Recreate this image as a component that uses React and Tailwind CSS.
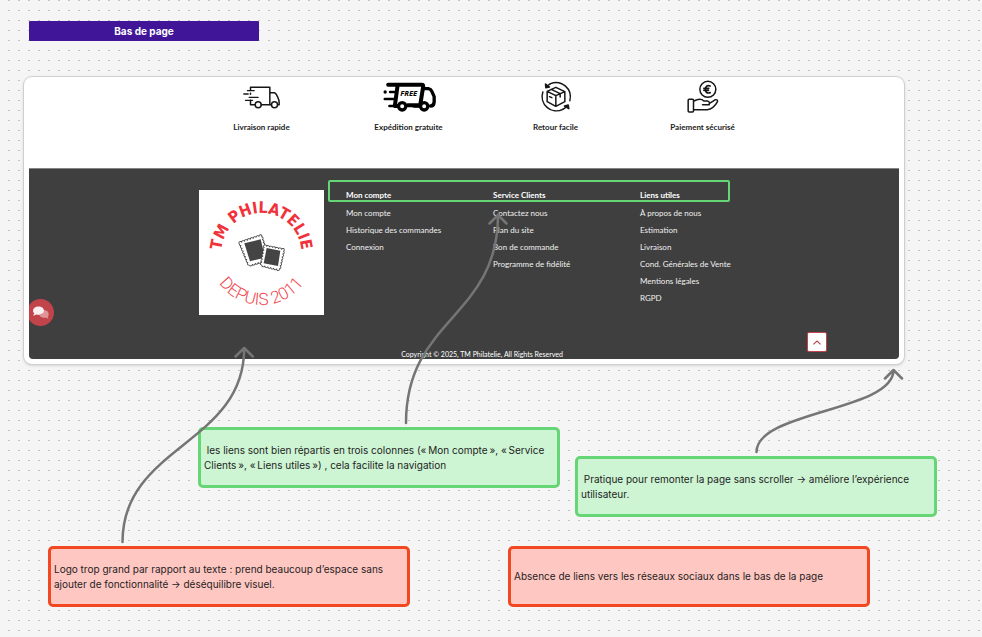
import React from "react";

const columns = [
  {
    title: "Mon compte",
    links: ["Mon compte", "Historique des commandes", "Connexion"],
  },
  {
    title: "Service Clients",
    links: ["Contactez nous", "Plan du site", "Bon de commande", "Programme de fidélité"],
  },
  {
    title: "Liens utiles",
    links: [
      "À propos de nous",
      "Estimation",
      "Livraison",
      "Cond. Générales de Vente",
      "Mentions légales",
      "RGPD",
    ],
  },
];

function FastTruck() {
  return (
    <svg viewBox="34.5 21 180 120" className="h-10 w-[60px]" fill="none" stroke="#161616" strokeWidth="4.5" strokeLinecap="round" strokeLinejoin="round" aria-hidden="true">
      <path d="M90 60V52H148V104H123M90 70V73M90 91V104H103" />
      <path d="M149 68H162Q168 72 171 80Q176 90 176 98V104H172M149 104H152" />
      <circle cx="113" cy="104" r="9" />
      <circle cx="162" cy="104" r="9" />
      <path d="M81 62H101M70 72H83M86 82H113M75 91H96" strokeWidth="4" />
    </svg>
  );
}

function FreeTruck() {
  return (
    <svg viewBox="475.5 21 180 120" className="h-10 w-[60px]" fill="none" stroke="#000" strokeWidth="10" strokeLinecap="round" strokeLinejoin="round" aria-hidden="true">
      <path d="M503 44H604Q609 44 608 50L599 106H562M531 48L523 108H530" strokeWidth="12" />
      <path d="M608 56H624Q631 57 634 64L641 80V96Q640 108 630 108M580 108H596" />
      <path d="M509 66H522M493 87H520M507 108H524" strokeWidth="8" />
      <circle cx="494" cy="66" r="5" fill="#000" stroke="none" />
      <circle cx="545" cy="109" r="11" fill="#fff" />
      <circle cx="611" cy="109" r="11" fill="#fff" />
      <text x="539" y="77" stroke="none" fill="#000" className="font-['Open_Sans',sans-serif] text-[23px] font-bold italic">FREE</text>
    </svg>
  );
}

function ReturnBox() {
  return (
    <svg viewBox="76.5 21 180 120" className="h-10 w-[60px]" fill="none" stroke="#161616" strokeWidth="4.5" strokeLinecap="round" strokeLinejoin="round" aria-hidden="true">
      <path d="M150 41A43 43 0 0 1 208 92" />
      <path d="M187 118A43 43 0 0 1 127 66" />
      <path d="M140 48L150 41M196 112L187 118" />
      <path d="M135 42L136 53L147 51Z" fill="#161616" />
      <path d="M205 116L203 105L192 108Z" fill="#161616" />
      <path d="M140 64L166 52L193 65V95L166 109L140 95ZM140 64L166 77L193 65M166 77V109M152 58L179 71V81" />
      <path d="M147 80L154 83" />
    </svg>
  );
}

function HandEuro() {
  return (
    <svg viewBox="517.5 21 180 120" className="h-10 w-[60px]" fill="none" stroke="#161616" strokeWidth="4.5" strokeLinecap="round" strokeLinejoin="round" aria-hidden="true">
      <circle cx="622" cy="58" r="24" />
      <path d="M629 48Q615 44 615 58T629 68M610 55H625M610 61H624" strokeWidth="5" />
      <rect x="563" y="88" width="16" height="38" rx="3" />
      <path d="M580 93C592 87 602 85 610 93H621Q629 95 626 104H606M627 100L645 89Q652 88 651 95C644 108 634 118 620 119H580" />
    </svg>
  );
}

const features = [
  { label: "Livraison rapide", Icon: FastTruck },
  { label: "Expédition gratuite", Icon: FreeTruck },
  { label: "Retour facile", Icon: ReturnBox },
  { label: "Paiement sécurisé", Icon: HandEuro },
];

function Stamp({ outline, inner }) {
  return (
    <g>
      <polygon points={outline} fill="none" stroke="#444" strokeWidth="11" strokeLinecap="round" strokeDasharray="0.1 9" />
      <polygon points={outline} fill="#fff" stroke="#fff" strokeWidth="6" strokeLinecap="round" strokeDasharray="0.1 9" />
      <polygon points={inner} fill="#444" />
    </g>
  );
}

function Logo() {
  return (
    <svg viewBox="27 30 375 375" className="block h-[125px] w-[125px] bg-white" role="img" aria-label="TM Philatelie, depuis 2011">
      <defs>
        <path id="arc-top" d="M94 219A120 120 0 0 1 334 219" />
        <path id="arc-bottom" d="M58 219A156 156 0 0 0 370 219" />
      </defs>
      <text fill="#f0323a" textAnchor="middle" className="font-['DejaVu_Sans_Condensed',sans-serif] text-[48px] font-bold">
        <textPath href="#arc-top" startOffset="50%">TM PHILATELIE</textPath>
      </text>
      <text fill="#f0484e" textAnchor="middle" className="font-['Roboto',sans-serif] text-[51px] font-light">
        <textPath href="#arc-bottom" startOffset="50%">DEPUIS 2011</textPath>
      </text>
      <Stamp outline="151,189 213,168 233,238 178,255" inner="163,190 212,178 225,233 180,244" />
      <Stamp outline="225,199 280,210 267,268 215,255" inner="230,204 271,212 264,258 221,250" />
    </svg>
  );
}

function SiteFooter() {
  return (
    <section className="absolute left-[23px] top-[76px] w-[882px] rounded-[9px] border border-[#d0d0d0] bg-white px-[5px] pb-[5px] font-['Lato',sans-serif] shadow-sm">
      <div className="flex h-[91px] justify-center pl-9">
        {features.map(({ label, Icon }) => (
          <div key={label} className="flex w-[147px] flex-col items-center">
            <Icon />
            <p className="text-[8px] leading-5 font-bold text-[#222]">{label}</p>
          </div>
        ))}
      </div>
      <footer className="relative flex h-[191px] flex-col overflow-hidden rounded-b-sm border-t border-[#858585] bg-[#3f3f3f] text-white">
        <div className="flex grow justify-center pt-[21px] pl-9">
          <div className="w-[147px] pl-[11px]">
            <Logo />
          </div>
          {columns.map((column) => (
            <nav key={column.title} aria-label={column.title} className="w-[147px] pl-[11px] whitespace-nowrap">
              <h2 className="text-[8px] leading-[11px] font-bold">{column.title}</h2>
              <ul className="pt-1 text-[8px] leading-[17px] text-[#f0f0f0]">
                {column.links.map((link) => (
                  <li key={link}>
                    <a href="#">{link}</a>
                  </li>
                ))}
              </ul>
            </nav>
          ))}
        </div>
        <p className="pl-9 text-center text-[7px] leading-[9px]">Copyright © 2025, TM Philatelie, All Rights Reserved</p>
        <button type="button" aria-label="Ouvrir le chat" className="absolute top-[130px] -left-[2px] flex size-[27px] items-center justify-center rounded-full bg-[#c1444b]">
          <svg viewBox="0 0 48 38" className="h-[13px] w-4" aria-hidden="true">
            <path d="M31 12C42 11 48 17 47 25Q47 29 44 31L47 37Q42 37 38 34C29 36 22 33 19 27Q31 26 31 12Z" fill="#df959a" />
            <path d="M16 1C26 1 33 6 33 13S26 26 16 26Q13 26 10 25Q6 28 0 28L4 22C-5 14 2 1 16 1Z" fill="#fbeff0" />
          </svg>
        </button>
        <button type="button" aria-label="Remonter" className="absolute right-[72px] bottom-[7px] flex size-5 items-center justify-center rounded-xs border border-[#c1444b] bg-white">
          <svg viewBox="0 0 8 5" className="h-[5px] w-2" fill="none" stroke="#b8474d" strokeWidth="1.2" aria-hidden="true">
            <path d="M0.4 4.4L4 1L7.6 4.4" />
          </svg>
        </button>
      </footer>
    </section>
  );
}

function Note({ tone, place, children }) {
  const tones = {
    good: "border-[#66d575] bg-[#cdf4d3]",
    bad: "border-[#f24822] bg-[#ffc7c2]",
  };
  return (
    <article className={`absolute flex h-[61px] w-[362px] items-center rounded-[5px] border-3 px-[3px] text-[10px] leading-[15px] text-[#1e1e1e] ${tones[tone]} ${place}`}>
      <p>{children}</p>
    </article>
  );
}

function Connectors() {
  return (
    <svg viewBox="0 0 982 637" className="pointer-events-none absolute top-0 left-0 h-[637px] w-[982px]" fill="none" stroke="#757575" strokeWidth="2.5" strokeLinecap="round" strokeLinejoin="round" aria-hidden="true">
      <path d="M122.5 542C122.5 445 244.2 445 244.2 348M235.5 356.5L244.2 348L252.7 356.5" />
      <path d="M406 423C406 318 498 318 498 215M489.5 223.5L498 215L506.5 223.5" />
      <path d="M756.5 452C756.5 411 893.5 411 893.5 370M885 378.5L893.5 370L902 378.5" />
    </svg>
  );
}

export default function App() {
  return (
    <main className="relative min-h-screen w-full overflow-hidden bg-[#f5f5f5] bg-[conic-gradient(from_0deg_at_2px_1px,#f5f5f5_75%,#c3c3c3_0)] bg-[size:10px_10px] bg-[position:8px_0px] font-['Inter',sans-serif]">
      <h1 className="absolute top-[21px] left-[29px] h-5 w-[230px] rounded-[1px] bg-[#401598] text-center text-[10px] leading-5 font-bold text-white">
        Bas de page
      </h1>
      <SiteFooter />
      <div className="absolute top-[180px] left-[328px] h-[22px] w-[402px] rounded-xs border-2 border-[#66d575]" />
      <Note tone="good" place="left-[198px] top-[427px]">
        &nbsp;les liens sont bien répartis en trois colonnes («&#8239;Mon compte&#8239;», «&#8239;Service Clients&#8239;», «&#8239;Liens utiles&#8239;») , cela facilite la navigation
      </Note>
      <Note tone="good" place="left-[575px] top-[456px]">
        &nbsp;Pratique pour remonter la page sans scroller → améliore l’expérience utilisateur.
      </Note>
      <Note tone="bad" place="left-[48px] top-[546px]">
        Logo trop grand par rapport au texte : prend beaucoup d’espace sans ajouter de fonctionnalité → déséquilibre visuel.
      </Note>
      <Note tone="bad" place="left-[508px] top-[546px]">
        Absence de liens vers les réseaux sociaux dans le bas de la page
      </Note>
      <Connectors />
    </main>
  );
}
